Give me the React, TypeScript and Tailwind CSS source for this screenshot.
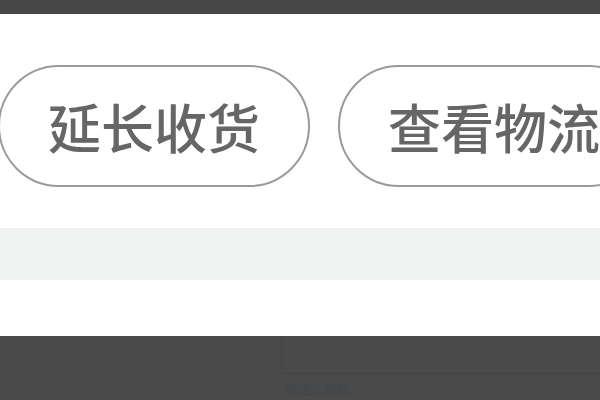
import React from 'react';

const ActionButton: React.FC<{ label: string }> = ({ label }) => (
  <button className="shrink-0 w-[312px] h-[122px] rounded-full border-2 border-[#9a9a9a] bg-white flex items-center justify-center text-[53px] leading-none font-medium text-[#666666]">
    {label}
  </button>
);

export default function App() {
  return (
    <div
      className="w-[600px] h-[400px] overflow-hidden flex flex-col bg-white"
      style={{ fontFamily: '"Noto Sans CJK SC", "Noto Sans", sans-serif' }}
    >
      {/* top dim strip */}
      <div className="h-[14px] shrink-0 bg-[#474747]" />

      {/* action buttons */}
      <div className="h-[214px] shrink-0 flex items-start gap-[28px] pt-[51px] ml-[-2px] overflow-hidden">
        <ActionButton label="延长收货" />
        <ActionButton label="查看物流" />
      </div>

      {/* divider band */}
      <div className="h-[52px] shrink-0 bg-[#f1f3f2]" />

      <div className="h-[56px] shrink-0 bg-white" />

      {/* bottom dim overlay */}
      <div className="flex-1 bg-[#4a4a4a] flex flex-col pl-[281px]">
        <div className="h-[38px] border-l border-b border-[#434343]" />
        <div className="mt-[8px] pl-[4px] text-[13px] leading-none text-[#42474b] font-bold">自定义地址</div>
      </div>
    </div>
  );
}
